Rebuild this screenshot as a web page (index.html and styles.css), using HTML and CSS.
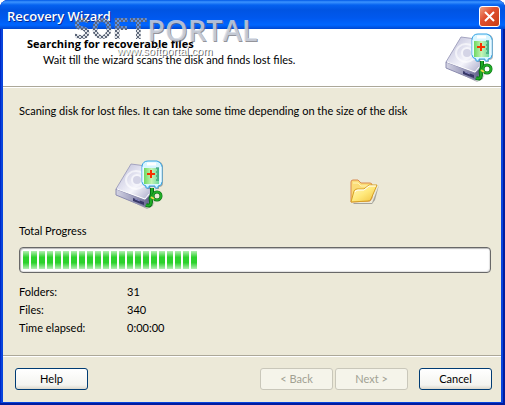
FILE: index.html
```
<!DOCTYPE html>
<html lang="en">
<head>
<meta charset="UTF-8">
<meta name="viewport" content="width=device-width, initial-scale=1.0">
<title>Recovery Wizard</title>
<link rel="stylesheet" href="styles.css">
</head>
<body>
<!-- shared disk icon -->
<svg class="defs" width="0" height="0" aria-hidden="true">
    <defs>
        <linearGradient id="diskTop" x1="0" y1="0" x2="1" y2="1">
            <stop offset="0" stop-color="#b4b4d0"/>
            <stop offset="0.35" stop-color="#dcdcec"/>
            <stop offset="0.6" stop-color="#f6f6fc"/>
            <stop offset="1" stop-color="#a6a6c6"/>
        </linearGradient>
        <linearGradient id="diskSide" x1="0" y1="0" x2="1" y2="0">
            <stop offset="0" stop-color="#d4d4e4"/>
            <stop offset="0.5" stop-color="#9c9cbc"/>
            <stop offset="1" stop-color="#5c5c86"/>
        </linearGradient>
        <linearGradient id="liquid" x1="0" y1="0" x2="1" y2="0">
            <stop offset="0" stop-color="#6ed860"/>
            <stop offset="0.5" stop-color="#c4f4b4"/>
            <stop offset="1" stop-color="#70d8a0"/>
        </linearGradient>
        <linearGradient id="folderFront" x1="0" y1="0" x2="1" y2="1">
            <stop offset="0" stop-color="#fffbd0"/>
            <stop offset="0.5" stop-color="#ffe97c"/>
            <stop offset="1" stop-color="#f0bf38"/>
        </linearGradient>
        <symbol id="disk" viewBox="0 0 50 50">
            <path d="M3 35L33 48L39 44L41 25L38 46L32 49Z" fill="#77777f" opacity=".5"/>
            <path d="M16 4L31 6L36 34L30 40L1 29Z" fill="url(#diskTop)" stroke="#a4a4c0" stroke-width="1"/>
            <path d="M1 29L30 40L36 34L34 43L30 47L1 35Z" fill="url(#diskSide)" stroke="#8c8cb0" stroke-width="1"/>
            <path d="M2 29L30 39L34 34" fill="none" stroke="#fff" stroke-width="1"/>
            <path d="M18 38L29 42V45L18 41Z" fill="#383868"/>
            <path d="M20 39L25 41" stroke="#8c8cc8" stroke-width="1"/>
            <ellipse cx="21" cy="20" rx="10" ry="9" fill="none" stroke="#fff" stroke-width="2" opacity=".6"/>
            <ellipse cx="22" cy="20" rx="5" ry="5" fill="#d4d4e6" stroke="#f4f4fa" stroke-width="2"/>
            <path d="M29 4Q30 1 34 1H43Q47 2 48 6V23Q48 27 44 27V29H41V27H35V29H32V27Q28 26 28 23Z" fill="#555" opacity=".45"/>
            <path d="M27 6Q28 1 33 1H42Q46 2 47 6V22Q47 26 43 26V28H40V26H34V28H31V26Q27 25 27 22Z" fill="#d8f6ff" stroke="#36a4e6" stroke-width="1"/>
            <path d="M29 8H44V24H29Z" fill="url(#liquid)"/>
            <path d="M32 4H41" stroke="#fff" stroke-width="3"/>
            <path d="M28 7V22M46 7V22" stroke="#fff" stroke-width="1"/>
            <path d="M41 8H44M42 10H44M41 12H44M42 14H44M41 16H44M42 18H44M41 20H44" stroke="#168868" stroke-width="1"/>
            <path d="M36 10V18M32 14H40" stroke="#f83000" stroke-width="2"/>
            <path d="M37 28V34Q35 38 36 42Q36 47 31 45" fill="none" stroke="#087014" stroke-width="4"/>
            <path d="M37 28V34Q35 38 36 42Q36 47 31 45" fill="none" stroke="#20ac28" stroke-width="2"/>
            <circle cx="42" cy="36" r="4" fill="none" stroke="#087014" stroke-width="3"/>
            <circle cx="42" cy="36" r="4" fill="none" stroke="#22ac28" stroke-width="2"/>
            <path d="M36 37L39 39" stroke="#ead848" stroke-width="2"/>
        </symbol>
    </defs>
</svg>

<div class="window">
    <div class="titlebar">
        <h1>Recovery Wizard</h1>
        <button class="close" type="button" aria-label="Close">
            <svg width="13" height="13" viewBox="0 0 13 13"><path d="M2 2L11 11M11 2L2 11" stroke="#fff" stroke-width="2"/></svg>
        </button>
    </div>

    <div class="header">
        <div class="header-text">
            <h2>Searching for recoverable files</h2>
            <p>Wait till the wizard scans the disk and finds lost files.</p>
        </div>
        <svg class="disk" width="50" height="50"><use href="#disk"/></svg>
    </div>

    <div class="content">
        <p>Scaning disk for lost files. It can take some time depending on the size of the disk</p>
        <div class="transfer">
            <svg class="disk" width="50" height="50"><use href="#disk"/></svg>
            <svg class="folder" width="30" height="28" viewBox="0 0 30 28">
                <path d="M3 25L22 25L29 7L25 22L22 26H4Z" fill="#777" opacity=".6"/>
                <path d="M1 24V4Q1 2 3 2H8L11 5H20Q22 5 22 7V20L20 23Z" fill="#fbdc78" stroke="#d98a50" stroke-width="1"/>
                <path d="M3 5H8L11 8H20" fill="none" stroke="#fff4b8" stroke-width="1"/>
                <path d="M1 24L4 13Q5 11 7 11H14L19 7H27L21 21Q20 23 18 23Z" fill="url(#folderFront)" stroke="#d6a024" stroke-width="1"/>
                <path d="M5 14Q6 12 8 12H14L19 8H26" fill="none" stroke="#fff" stroke-width="1"/>
            </svg>
        </div>
        <div class="progress-label" id="progressLabel">Total Progress</div>
        <div class="progress" role="progressbar" aria-labelledby="progressLabel" aria-valuemin="0" aria-valuemax="100" aria-valuenow="38">
            <div class="progress-fill" style="width: 38%"></div>
        </div>
        <dl class="stats">
            <dt>Folders:</dt><dd>31</dd>
            <dt>Files:</dt><dd>340</dd>
            <dt>Time elapsed:</dt><dd>0:00:00</dd>
        </dl>
    </div>

    <div class="footer">
        <button class="btn btn-help" type="button">Help</button>
        <button class="btn" type="button" disabled>&lt; Back</button>
        <button class="btn" type="button" disabled>Next &gt;</button>
        <button class="btn btn-cancel" type="button">Cancel</button>
    </div>

    <div class="watermark">
        <div class="brand"><span class="brand-soft">SOFT</span><span class="brand-portal">PORTAL</span></div>
        <div class="brand-url">www.softportal.com</div>
    </div>
</div>
</body>
</html>
```
FILE: styles.css
```
* {
    box-sizing: border-box;
}

body {
    margin: 0;
    background-color: #fff;
    font-family: Lato, "Liberation Sans", Arial, sans-serif;
    font-size: 11px;
    line-height: 18px;
    color: #000;
}

h1, h2, p, dl, dd {
    margin: 0;
}

.defs {
    position: absolute;
}

.window {
    position: relative;
    display: flex;
    flex-direction: column;
    min-height: 100vh;
    padding: 0 4px 3px 3px;
    border-radius: 8px 8px 0 0;
    background-color: #0844dc;
    box-shadow: inset -2px -2px 0 #001ca0, inset 1px 0 0 #0028c8;
}

.titlebar {
    display: flex;
    align-items: center;
    justify-content: space-between;
    height: 29px;
    margin: 0 -4px 0 -3px;
    padding: 3px 5px 0 7px;
    border-radius: 8px 8px 0 0;
    background: linear-gradient(#0058e6 0, #3c94ff 2px, #0562f0 5px, #0054e3 10px, #0058ee 18px, #0066ff 25px, #0048d0 29px);
}
.titlebar h1 {
    font-family: "Open Sans", sans-serif;
    font-size: 13px;
    font-weight: 600;
    color: #fff;
    text-shadow: 1px 1px 0 #0a2a90;
}

.close {
    display: flex;
    align-items: center;
    justify-content: center;
    width: 21px;
    height: 21px;
    padding: 0;
    border: 1px solid #fff;
    border-radius: 3px;
    background: linear-gradient(135deg, #f0a080, #e05030 40%, #c83c14);
}

.header {
    display: flex;
    justify-content: space-between;
    height: 58px;
    padding: 4px 6px 0 24px;
    border-bottom: 1px solid #aca899;
    background-color: #fff;
}
.header-text {
    padding-top: 3px;
    line-height: 16px;
}
.header h2 {
    font-family: "Open Sans", sans-serif;
    font-size: 11px;
    font-weight: 700;
}
.header p {
    padding-left: 16px;
}

.content {
    flex: 1;
    padding: 14px 10px 0 16px;
    border-top: 1px solid #fff;
    background-color: #ece9d8;
}

.transfer {
    display: grid;
    grid-template-columns: 1fr 1fr;
    align-items: center;
    justify-items: center;
    margin-top: 40px;
    padding: 0 14px 0 8px;
}
.folder {
    margin-top: 14px;
}

.progress-label {
    margin-top: 12px;
}

.progress {
    height: 26px;
    margin-top: 7px;
    padding: 3px;
    border: 1px solid #686868;
    border-radius: 4px;
    background-color: #fff;
    box-shadow: inset 1px 1px 1px #b8b8b8, inset -1px -1px 1px #e0e0e0;
}
/* 6px blocks with a 2px gap */
.progress-fill {
    height: 18px;
    background:
        repeating-linear-gradient(90deg, transparent 0, transparent 6px, #fff 6px, #fff 8px),
        linear-gradient(#b4f0b4, #2cd22c 35%, #2cd22c 65%, #b4f0b4);
}

.stats {
    display: grid;
    grid-template-columns: 108px 1fr;
    margin-top: 10px;
}

.footer {
    display: flex;
    align-items: center;
    height: 47px;
    padding: 0 9px 0 12px;
    border-top: 1px solid #aca899;
    background-color: #ece9d8;
    box-shadow: inset 0 1px 0 #fff;
}

.btn {
    width: 73px;
    height: 22px;
    margin-left: 2px;
    padding: 0;
    border: 1px solid #003c74;
    border-radius: 3px;
    background: linear-gradient(#fff, #f4f4f0 80%, #dcd8cc);
    font: inherit;
    line-height: 18px;
    color: #000;
}
.btn:disabled {
    border-color: #c9c7ba;
    background: #f5f4ea;
    color: #a1a192;
}
.btn-help {
    margin-left: 0;
    margin-right: auto;
}
.btn-cancel {
    margin-left: 11px;
}

.watermark {
    position: absolute;
    top: 14px;
    left: 73px;
    pointer-events: none;
}
.brand {
    display: flex;
    line-height: 32px;
}
.brand-soft {
    width: 74px;
    background: repeating-conic-gradient(#5c6678 0 25%, rgba(190, 196, 206, 0.5) 0 50%) 0 0 / 4px 4px;
    background-clip: text;
    font-family: "DejaVu Sans Condensed", "DejaVu Sans", sans-serif;
    font-size: 28px;
    font-weight: 700;
    color: transparent;
}
.brand-portal {
    font-family: "Open Sans", sans-serif;
    font-size: 29px;
    font-weight: 600;
    color: rgba(210, 216, 228, 0.8);
    text-shadow: 1px 1px 0 rgba(100, 100, 110, 0.7);
}
.brand-url {
    padding-left: 44px;
    font-family: "Liberation Sans", Arial, sans-serif;
    font-size: 11px;
    line-height: 10px;
    color: #fff;
    text-shadow: 1px 1px 0 #666;
}
```
